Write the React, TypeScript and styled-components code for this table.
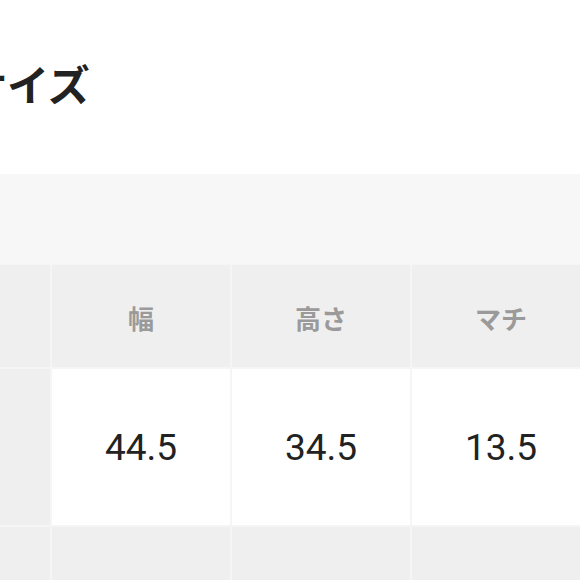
import React from "react";
import styled, { createGlobalStyle } from "styled-components";

const GlobalStyle = createGlobalStyle`
  html, body {
    margin: 0;
    padding: 0;
    background: #ffffff;
    overflow: hidden;
  }
  body {
    width: 580px;
    height: 580px;
    font-family: Roboto, "Noto Sans CJK JP", sans-serif;
  }
`;

const Page = styled.div`
  width: 580px;
  height: 580px;
  overflow: hidden;
  display: flex;
  flex-direction: column;
  & > * {
    flex-shrink: 0;
  }
`;

const TitleArea = styled.div`
  height: 174px;
  display: flex;
  align-items: flex-start;
  padding-top: 54px;
  box-sizing: border-box;
`;

const Title = styled.h2`
  margin: 0 0 0 -35px;
  font-family: "Noto Sans CJK JP", sans-serif;
  font-size: 42px;
  line-height: 58px;
  font-weight: 700;
  color: #222222;
  white-space: nowrap;
`;

const Band = styled.div`
  height: 90px;
  background: #f7f7f7;
`;

const Grid = styled.div`
  display: grid;
  grid-template-columns: 50px repeat(3, 178px);
  grid-template-rows: 102px 156px 60px;
  gap: 2px;
  background: #f5f5f5;
  width: 600px;
  padding-top: 1px;
`;

const Cell = styled.div<{ $white?: boolean }>`
  display: flex;
  align-items: center;
  justify-content: center;
  background: ${(p) => (p.$white ? "#ffffff" : "#efefef")};
`;

const HeadLabel = styled.span`
  font-family: "Noto Sans CJK JP", sans-serif;
  font-size: 26px;
  font-weight: 700;
  color: #9a9a9a;
  margin-top: 2px;
`;

const Value = styled.span`
  font-family: Roboto, sans-serif;
  font-size: 37px;
  font-weight: 400;
  color: #222222;
`;

const heads = ["幅", "高さ", "マチ"];
const values = ["44.5", "34.5", "13.5"];

export default function App() {
  return (
    <Page>
      <GlobalStyle />
      <TitleArea>
        <Title>サイズ</Title>
      </TitleArea>
      <Band />
      <Grid>
        <Cell />
        {heads.map((h) => (
          <Cell key={h}>
            <HeadLabel>{h}</HeadLabel>
          </Cell>
        ))}
        <Cell />
        {values.map((v, i) => (
          <Cell key={i} $white>
            <Value>{v}</Value>
          </Cell>
        ))}
        <Cell />
        <Cell />
        <Cell />
        <Cell />
      </Grid>
    </Page>
  );
}
